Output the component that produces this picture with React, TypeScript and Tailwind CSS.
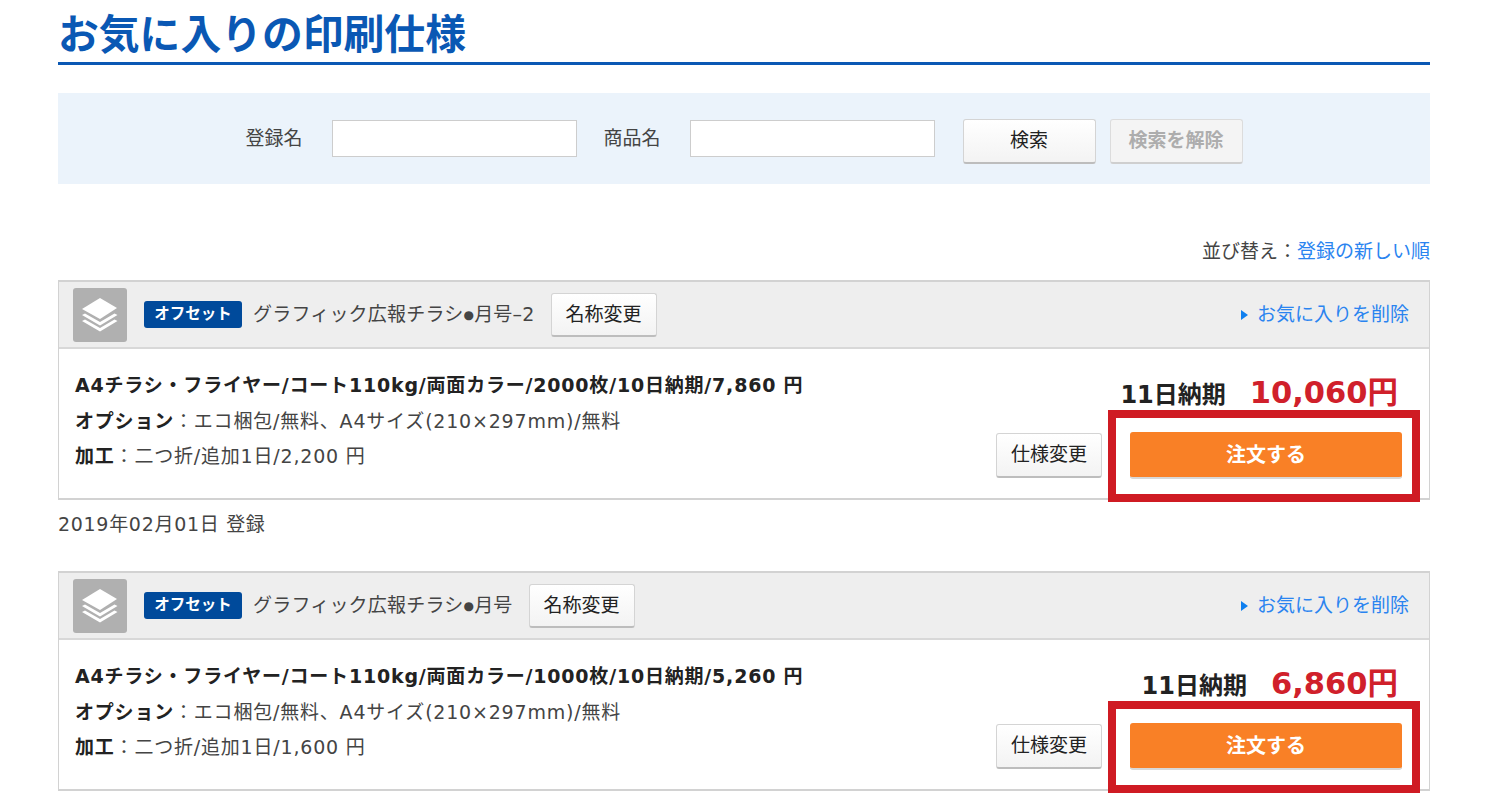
const FONT = "font-['DejaVu_Sans','Noto_Sans_CJK_JP',sans-serif]";

type Spec = {
  name: string;
  suffix?: string;
  line1: string;
  price2: string;
  total: string;
  processing: string;
  date?: string;
};

const specs: Spec[] = [
  {
    name: "グラフィック広報チラシ",
    suffix: "月号–2",
    line1: "A4チラシ・フライヤー/コート110kg/両面カラー/2000枚/10日納期/7,860 円",
    price2: "2,200 円",
    total: "10,060円",
    processing: "二つ折/追加1日/",
    date: "2019年02月01日 登録",
  },
  {
    name: "グラフィック広報チラシ",
    suffix: "月号",
    line1: "A4チラシ・フライヤー/コート110kg/両面カラー/1000枚/10日納期/5,260 円",
    price2: "1,600 円",
    total: "6,860円",
    processing: "二つ折/追加1日/",
  },
];

function LayersIcon() {
  return (
    <div className="flex h-[54px] w-[54px] shrink-0 items-center justify-center rounded-[3px] bg-[#b0b0b0]">
      <svg width="44" height="44" viewBox="0 0 44 44" fill="white">
        <path d="M22 26 L4 16 L22 5 L39 15 Z" />
        <path d="M7 20.5 L22 29 L36.5 20.5 L39.5 22 L22 32.5 L4 22 Z" />
        <path d="M7 26.5 L22 35 L36.5 26.5 L39.5 28 L22 38.5 L4 28 Z" />
      </svg>
    </div>
  );
}

function GrayButton({ label, className }: { label: string; className: string }) {
  return (
    <button
      className={`flex items-center justify-center rounded-[3px] border border-[#d4d4d4] border-b-2 border-b-[#bdbdbd] bg-gradient-to-b from-white to-[#f3f3f3] text-[19px] text-[#222] ${className}`}
    >
      {label}
    </button>
  );
}

function SpecCard({ spec }: { spec: Spec }) {
  return (
    <div className="relative">
      <div className="border-2 border-[#d2d2d2] border-x-[1px]">
        <div className="flex h-[67px] items-center border-b-2 border-[#d8d8d8] bg-[#eeeeee] pl-[14px] pr-[20px]">
          <LayersIcon />
          <span className="ml-[17px] flex h-[27px] w-[98px] items-center justify-center rounded-[3px] bg-[#004a9b] text-[15.5px] font-bold text-white">
            オフセット
          </span>
          <span className="ml-[11px] flex items-center text-[19px] tracking-[0.2px] text-[#444]">
            {spec.name}
            <span className="text-[12px]">●</span>
            {spec.suffix}
          </span>
          <GrayButton label="名称変更" className="ml-[16px] h-[44px] w-[106px]" />
          <a className="ml-auto flex items-center text-[19px] text-[#2a84f0]">
            <span className="mr-[9px] h-0 w-0 border-y-[5px] border-l-[7px] border-y-transparent border-l-[#0f7fef]" />
            お気に入りを削除
          </a>
        </div>
        <div className="flex h-[149px] justify-between pl-[16px] pr-[27px]">
          <div className="flex flex-col gap-[11px] pt-[24px] text-[19px] leading-[24.5px] tracking-[0.8px] text-[#444]">
            <p className="font-bold text-[#222]">{spec.line1}</p>
            <p>
              <b className="text-[#222]">オプション</b>：エコ梱包/無料、A4サイズ(210×297mm)/無料
            </p>
            <p>
              <b className="text-[#222]">加工</b>：{spec.processing}
              {spec.price2}
            </p>
          </div>
          <div className="flex flex-col items-end pt-[24px]">
            <div className="flex items-baseline pr-[4px]">
              <span className="text-[24px] font-bold text-[#222]">11日納期</span>
              <span className="ml-[24px] text-[30.5px] leading-[40px] font-bold text-[#d0202b]">{spec.total}</span>
            </div>
            <div className="mt-[18px] flex items-center gap-[28px]">
              <GrayButton label="仕様変更" className="h-[45px] w-[106px]" />
              <button className="mt-[1px] flex h-[47px] w-[272px] items-center justify-center rounded-[3px] border-b-2 border-b-[#d8d8d8] bg-[#f98026] text-[20px] font-bold text-white">
                注文する
              </button>
            </div>
          </div>
        </div>
      </div>
      <div className="pointer-events-none absolute right-[10px] top-[130px] h-[92px] w-[312px] border-[8px] border-[#cf1b23]" />
    </div>
  );
}

export default function App() {
  return (
    <div className={`h-[804px] w-[1488px] overflow-hidden bg-white px-[58px] ${FONT}`}>
      <h1 className="h-[65px] border-b-[3px] border-[#0a58b4] pt-[10px] text-[40.8px] leading-[50px] font-bold text-[#0a58b4]">
        お気に入りの印刷仕様
      </h1>

      <div className="mt-[28px] flex h-[91px] items-center justify-center bg-[#ebf3fb] text-[19px] text-[#444]">
        <label>登録名</label>
        <input className="ml-[29px] h-[37px] w-[245px] border-[1px] border-[#cdcdcd] bg-white" />
        <label className="ml-[27px]">商品名</label>
        <input className="ml-[29px] h-[37px] w-[245px] border-[1px] border-[#cdcdcd] bg-white" />
        <GrayButton label="検索" className="ml-[28px] mt-[5px] h-[45px] w-[133px]" />
        <button className="ml-[14px] mt-[5px] h-[45px] w-[133px] rounded-[3px] border border-[#dcdcdc] border-b-2 border-b-[#cfcfcf] bg-[#f4f4f4] text-[19px] font-bold text-[#adadad]">
          検索を解除
        </button>
      </div>

      <div className="mt-[55px] h-[24px] text-right text-[19px] leading-[24px] text-[#444]">
        並び替え：<a className="text-[#2a84f0]">登録の新しい順</a>
      </div>

      <div className="mt-[17px] flex flex-col">
        {specs.map((spec) => (
          <div key={spec.total} className="h-[291px]">
            <SpecCard spec={spec} />
            {spec.date && <p className="mt-[12px] text-[19px] leading-[24px] tracking-[0.7px] text-[#444]">{spec.date}</p>}
          </div>
        ))}
      </div>
    </div>
  );
}
